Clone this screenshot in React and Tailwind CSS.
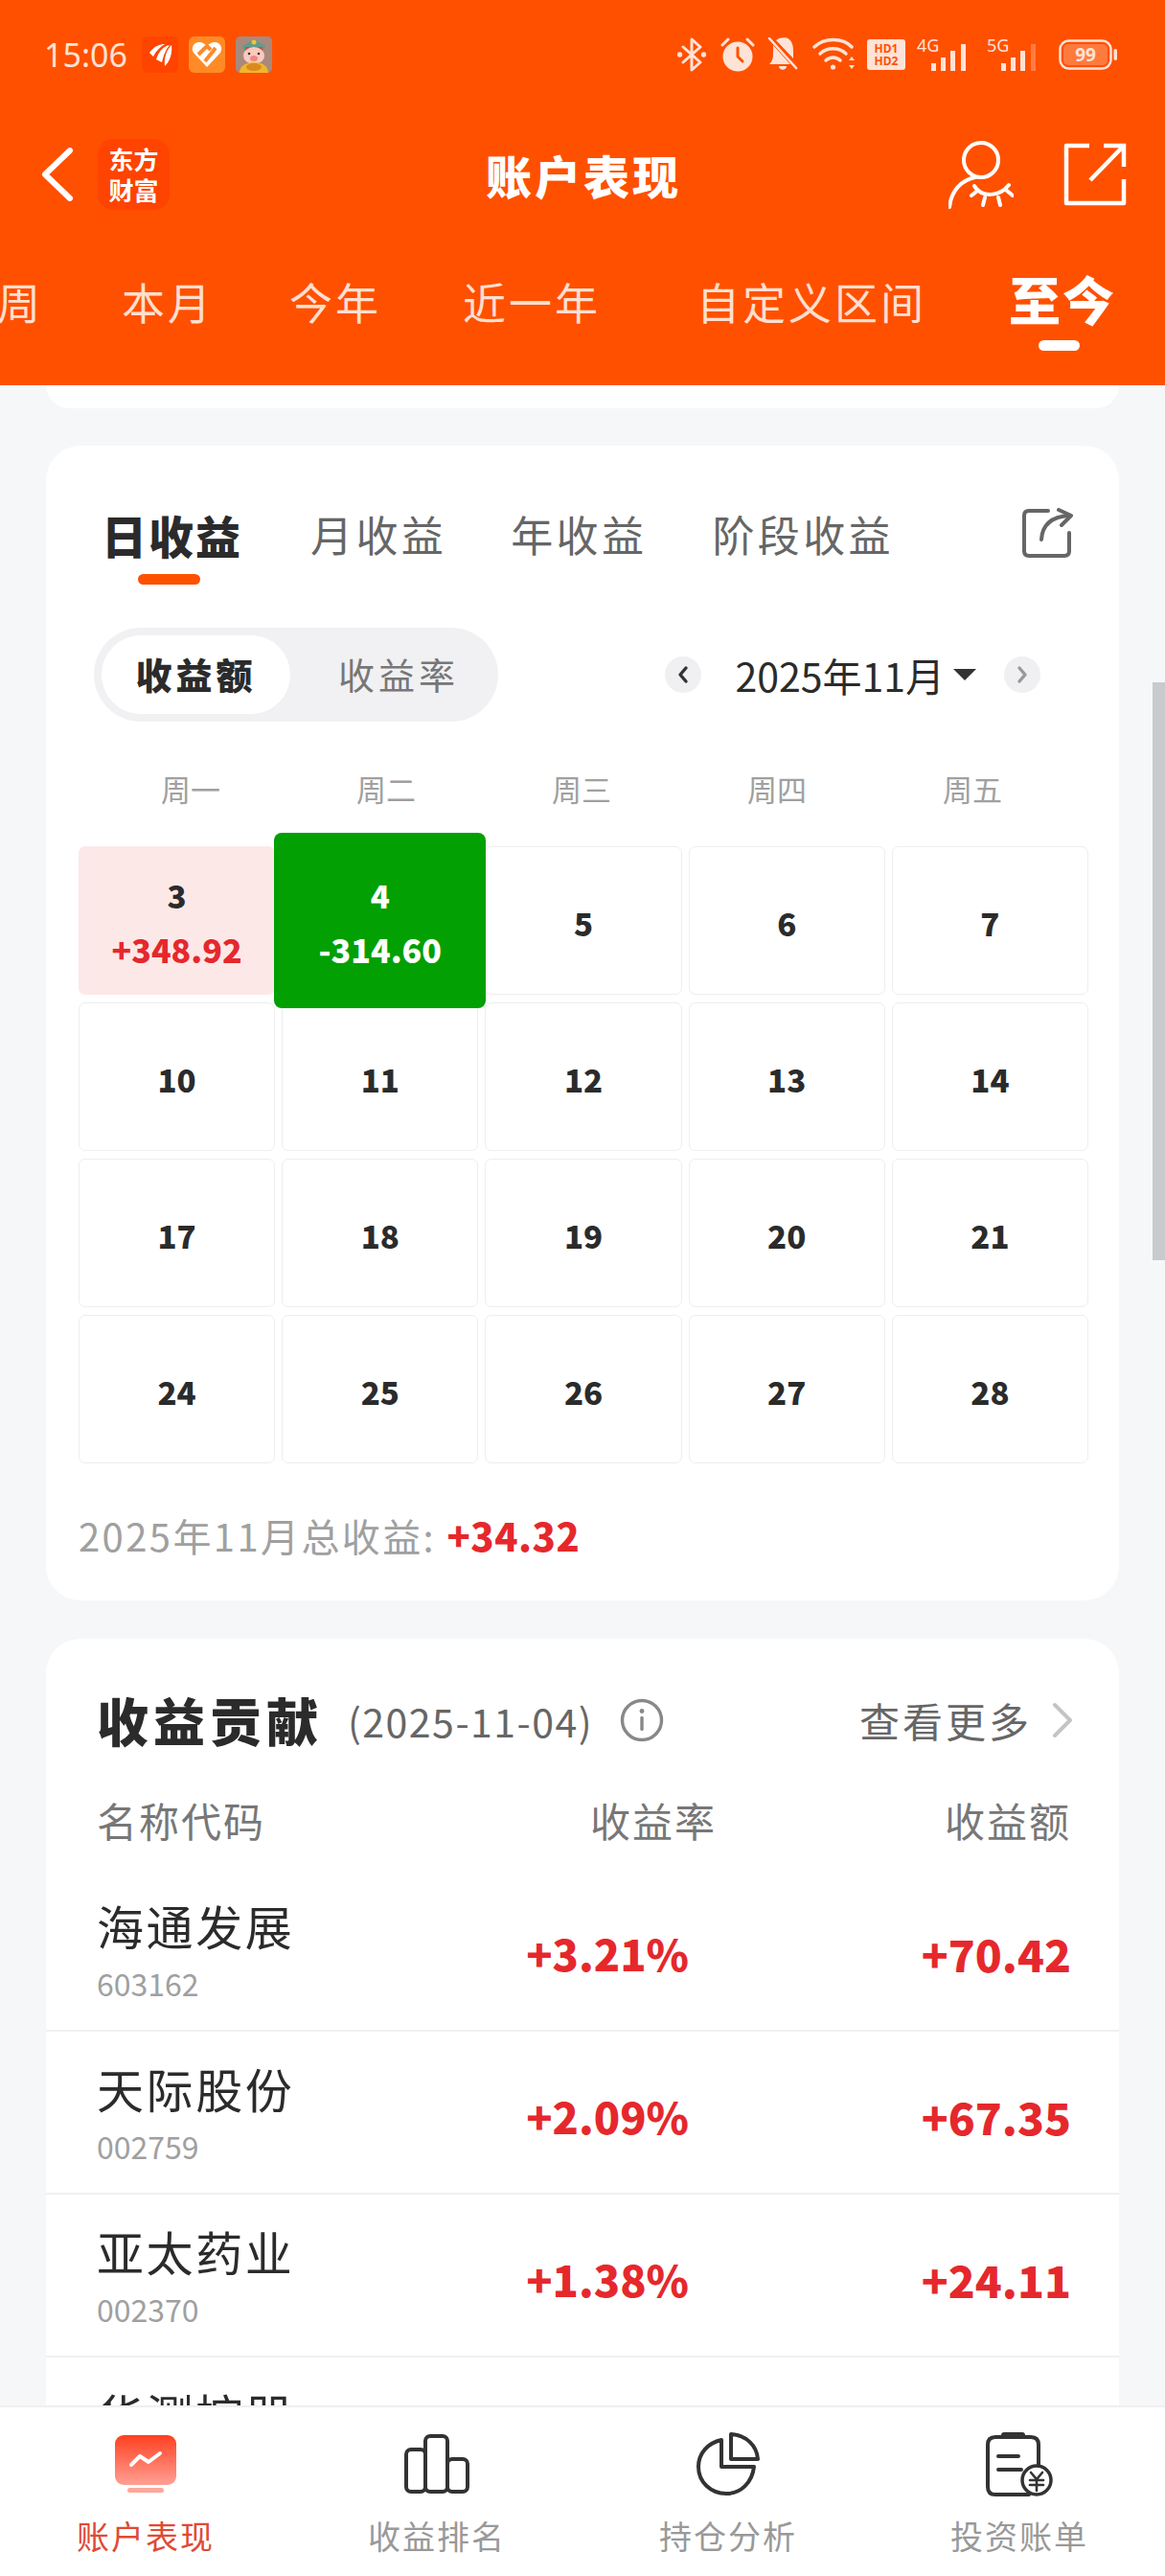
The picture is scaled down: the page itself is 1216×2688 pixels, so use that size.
import React from "react";

const FONT = { fontFamily: '"Noto Sans CJK SC", "Noto Sans", sans-serif' };

function Bluetooth() {
  return (
    <svg width="30" height="36" viewBox="0 0 30 36" fill="none" stroke="#ffe3d6" strokeWidth="3" strokeLinejoin="round" strokeLinecap="round">
      <path d="M6 10 L24 26 L15 34 V2 L24 10 L6 26" />
      <circle cx="2.5" cy="18" r="1.2" fill="#ffe3d6" />
      <circle cx="27.5" cy="18" r="1.2" fill="#ffe3d6" />
    </svg>
  );
}
function Alarm() {
  return (
    <svg width="36" height="36" viewBox="0 0 36 36" fill="none">
      <circle cx="18" cy="20" r="15.5" fill="#ffe3d6" />
      <path d="M18 11 V20 L23 25" stroke="#ff5000" strokeWidth="3" strokeLinecap="round" />
      <path d="M2 8 L8 2 M34 8 L28 2" stroke="#ffe3d6" strokeWidth="3" strokeLinecap="round" />
    </svg>
  );
}
function BellOff() {
  return (
    <svg width="32" height="36" viewBox="0 0 32 36" fill="none">
      <path d="M6 8 L24 28 H2 C5 25 6 22 6 17 Z" fill="#ffe3d6" />
      <path d="M9 3 C12 0 17 0 20 0.5 C25 2 27 8 27 14 V22 Z" fill="#ffe3d6" />
      <path d="M2 2 L30 33" stroke="#ff5000" strokeWidth="2" />
      <path d="M2 1 L30 32" stroke="#ffe3d6" strokeWidth="2.6" strokeLinecap="round" />
      <path d="M12 30 H20 C20 35 12 35 12 30 Z" fill="#ffe3d6" />
    </svg>
  );
}
function Wifi() {
  return (
    <svg width="46" height="36" viewBox="0 0 46 36" fill="none" stroke="#ffe3d6" strokeWidth="3.4" strokeLinecap="round">
      <path d="M2 10 C12 0 32 0 41 10" />
      <path d="M8 17 C15 10 28 10 35 17" />
      <path d="M14 24 C18 20 25 20 29 24" />
      <circle cx="21.5" cy="31" r="2.6" fill="#ffe3d6" stroke="none" />
      <path d="M38 24 L41 20 L44 24 Z M38 29 H44 L41 33 Z" fill="#ffe3d6" stroke="none" />
    </svg>
  );
}
function Hd() {
  return (
    <div className="w-[40px] h-[32px] rounded-[3px] bg-[#ffe3d6] flex flex-col items-center justify-center text-[#ff5000] text-[12px] leading-[13px] font-bold" style={{ fontFamily: '"Noto Sans", sans-serif' }}>
      <span>HD1</span>
      <span>HD2</span>
    </div>
  );
}
function Signal({ label, faded }) {
  return (
    <div className="relative w-[59px] h-[36px]">
      <span className="absolute left-0 top-[-2px] text-[18px] leading-[20px] text-[#ffe3d6]" style={{ fontFamily: '"Noto Sans", sans-serif' }}>{label}</span>
      <svg className="absolute left-0 top-0" width="59" height="36" viewBox="0 0 59 36" fill="#ffe3d6">
        <rect x="15" y="27" width="5" height="8" />
        <rect x="25" y="21" width="5" height="14" />
        <rect x="35" y="14" width="5" height="21" />
        <rect x="46" y="7" width="5" height="28" opacity={faded ? 0.3 : 1} />
      </svg>
    </div>
  );
}
function Battery() {
  return (
    <svg width="61" height="32" viewBox="0 0 61 32" fill="none">
      <rect x="1.5" y="1.5" width="53" height="29" rx="9" stroke="#ffe3d6" strokeWidth="2.5" />
      <rect x="5" y="5" width="46" height="22" rx="5" fill="#ff7a3d" />
      <rect x="57.5" y="10" width="3.5" height="12" rx="1.7" fill="#ffe3d6" />
      <text x="28" y="23" textAnchor="middle" fontSize="19" fontWeight="700" fill="#ffe3d6" fontFamily="Noto Sans, sans-serif">99</text>
    </svg>
  );
}
function AppA() {
  return (
    <svg width="38" height="38" viewBox="0 0 38 38">
      <rect width="38" height="38" rx="6" fill="#ff4400" />
      <path d="M8 17 C13 10 19 8 24 8 C19 11 15 15 12 21 Z M15 24 C18 15 23 10 29 9 C25 14 23 19 21 27 Z M24 31 C23 22 26 14 31 9 C32 17 30 25 24 31 Z" fill="#fff" />
    </svg>
  );
}
function AppB() {
  return (
    <svg width="38" height="38" viewBox="0 0 38 38">
      <rect width="38" height="38" rx="6" fill="#ff8a26" />
      <path d="M19 32 L5 17 C2 12 5 6 11 6 C14 6 17 8 19 10 C21 8 24 6 27 6 C33 6 36 12 33 17 Z" fill="#fff" />
      <path d="M10 19 L19 10 L23 14 M17 26 L28 12" stroke="#ff8a26" strokeWidth="4" fill="none" />
    </svg>
  );
}
function AppC() {
  return (
    <svg width="38" height="38" viewBox="0 0 38 38">
      <rect width="38" height="38" rx="5" fill="#a9897c" />
      <path d="M7 10 L19 3 L31 10 L29 15 H9 Z" fill="#5f9c8e" />
      <rect x="10" y="11" width="18" height="4" fill="#e0463a" />
      <circle cx="19" cy="6" r="2.5" fill="#f3c23a" />
      <ellipse cx="19" cy="20" rx="11" ry="9" fill="#fbc9bd" />
      <ellipse cx="19" cy="23" rx="4" ry="3" fill="#e88" />
      <circle cx="14" cy="18" r="1.3" fill="#333" />
      <circle cx="24" cy="18" r="1.3" fill="#333" />
      <path d="M4 38 C4 30 12 27 19 27 C26 27 34 30 34 38 Z" fill="#f1b52c" />
      <ellipse cx="19" cy="32" rx="8" ry="4" fill="#d98a1f" />
    </svg>
  );
}

function BackIcon() {
  return (
    <svg width="36" height="56" viewBox="0 0 36 56" fill="none" stroke="#fff" strokeWidth="6" strokeLinecap="round" strokeLinejoin="round">
      <path d="M31 3 L5 28 L31 53" />
    </svg>
  );
}
function UserEye() {
  return (
    <svg width="68" height="72" viewBox="0 0 68 72" fill="none" stroke="#fff" strokeWidth="4" strokeLinecap="round">
      <circle cx="34" cy="21" r="18" />
      <path d="M28 39 C14 42 3 52 1 70" />
      <path d="M27 48 C34 60 53 60 63 47" />
      <path d="M38 60 L36 68 M52 60 L54 68 M61 53 L67 58 M29 54 L24 58" />
    </svg>
  );
}
function ExternalIcon() {
  return (
    <svg width="66" height="66" viewBox="0 0 66 66" fill="none" stroke="#fff" strokeWidth="4.5">
      <path d="M27 3 H3 V63 H63 V38" strokeLinejoin="round" />
      <path d="M63 25 V3 H42 M63 3 L28 39" />
    </svg>
  );
}
function ShareIcon() {
  return (
    <svg width="54" height="52" viewBox="0 0 54 52" fill="none" stroke="#666" strokeWidth="4" strokeLinecap="round" strokeLinejoin="round">
      <path d="M28 3 H8 Q3 3 3 8 V45 Q3 50 8 50 H45 Q50 50 50 45 V26" />
      <path d="M21 33 C22 17 32 9 50 8" />
      <path d="M39 2 L52 8 L42 18" />
    </svg>
  );
}
function Chevron({ dir, color }) {
  return (
    <svg width="12" height="20" viewBox="0 0 12 20" fill="none" stroke={color} strokeWidth="3.4" strokeLinecap="round" strokeLinejoin="round">
      <path d={dir === "left" ? "M9 3 L3 10 L9 17" : "M3 3 L9 10 L3 17"} />
    </svg>
  );
}
function InfoIcon() {
  return (
    <svg width="46" height="46" viewBox="0 0 46 46" fill="none">
      <circle cx="23" cy="23" r="20.5" stroke="#888" strokeWidth="3.4" />
      <circle cx="23" cy="13.5" r="2.4" fill="#888" />
      <rect x="21.3" y="19" width="3.4" height="15" rx="1.4" fill="#888" />
    </svg>
  );
}

function TradeIcon() {
  return (
    <svg width="64" height="64" viewBox="0 0 64 64">
      <defs>
        <linearGradient id="redgrad" x1="0" y1="0" x2="0" y2="1">
          <stop offset="0" stopColor="#ff4020" />
          <stop offset="1" stopColor="#ffa094" />
        </linearGradient>
      </defs>
      <rect x="0" y="2" width="64" height="52" rx="9" fill="url(#redgrad)" />
      <rect x="13" y="57" width="38" height="5" rx="2.5" fill="#ffa79c" />
      <path d="M17 33 L26 24 L35 30 L47 21" fill="none" stroke="#fff" strokeWidth="4" strokeLinecap="round" strokeLinejoin="round" />
    </svg>
  );
}
function BarsIcon() {
  return (
    <svg width="68" height="62" viewBox="0 0 68 62" fill="none" stroke="#333" strokeWidth="4" strokeLinejoin="round">
      <rect x="2" y="16" width="20" height="44" rx="5" />
      <rect x="22" y="2" width="23" height="58" rx="5" />
      <rect x="45" y="26" width="21" height="34" rx="5" />
    </svg>
  );
}
function PieIcon() {
  return (
    <svg width="66" height="66" viewBox="0 0 66 66" fill="none" stroke="#333" strokeWidth="4" strokeLinejoin="round">
      <path d="M26 8 C12 11 2 22 2 36 C2 52 15 64 31 64 C46 64 58 53 60 36 H26 Z" />
      <path d="M36 2 C52 3 63 14 64 28 H36 Z" />
    </svg>
  );
}
function BillIcon() {
  return (
    <svg width="72" height="68" viewBox="0 0 72 68" fill="none" stroke="#333" strokeWidth="4" strokeLinecap="round">
      <path d="M46 66 H11 Q3 66 3 58 V14 Q3 6 11 6 H48 Q56 6 56 14 V36" />
      <path d="M20 4 H39" strokeWidth="6" />
      <path d="M14 26 H35 M14 40 H38" />
      <circle cx="54" cy="51" r="15" strokeWidth="3.5" />
      <path d="M48 43 L54 50 L60 43 M47 51 H61 M47 56 H61 M54 50 V62" strokeWidth="2.6" />
    </svg>
  );
}

function Cell({ n }) {
  return (
    <div className="h-[155px] rounded-[7px] border border-[#eeeeee] bg-white flex items-center justify-center text-[33px] font-black text-[#2b2b2b] leading-none pt-[6px]">
      {n}
    </div>
  );
}

const rows = [
  ["海通发展", "603162", "+3.21%", "+70.42"],
  ["天际股份", "002759", "+2.09%", "+67.35"],
  ["亚太药业", "002370", "+1.38%", "+24.11"],
  ["华测控器", "", "", ""],
];

export default function App() {
  return (
    <div className="relative w-[1216px] h-[2688px] overflow-hidden bg-[#f6f7f9] flex flex-col" style={FONT}>
      {/* orange header */}
      <header className="h-[402px] shrink-0 bg-[#ff5000] flex flex-col">
        <div className="h-[110px] shrink-0 flex items-center pl-[46px] pr-[50px] pt-[4px]">
          <span className="text-[34px] leading-none text-[#ffe3d6] w-[102px]" style={{ fontFamily: '"Noto Sans", sans-serif' }}>15:06</span>
          <div className="flex gap-[11px]">
            <AppA />
            <AppB />
            <AppC />
          </div>
          <div className="ml-auto flex items-center">
            <Bluetooth />
            <div className="ml-[15px]"><Alarm /></div>
            <div className="ml-[13px]"><BellOff /></div>
            <div className="ml-[15px]"><Wifi /></div>
            <div className="ml-[11px]"><Hd /></div>
            <div className="ml-[12px]"><Signal label="4G" /></div>
            <div className="ml-[14px]"><Signal label="5G" faded /></div>
            <div className="ml-[16px]"><Battery /></div>
          </div>
        </div>
        <div className="h-[144px] shrink-0 flex items-center justify-between pl-[42px] pr-[40px]">
          <div className="w-[340px] flex items-center">
            <BackIcon />
            <div className="ml-[24px] w-[75px] h-[74px] rounded-[16px] bg-[#ff4300] flex flex-col items-center justify-center text-white font-bold text-[26px] leading-[32px]">
              <span>东方</span>
              <span>财富</span>
            </div>
          </div>
          <h1 className="text-[48px] leading-none tracking-[3px] font-black text-white whitespace-nowrap">账户表现</h1>
          <div className="w-[340px] flex items-center justify-end gap-[52px]">
            <UserEye />
            <ExternalIcon />
          </div>
        </div>
        <nav className="h-[148px] shrink-0 flex items-center pb-[26px] text-[45px] tracking-[3px] text-[#ffdfcf] whitespace-nowrap">
          <span className="ml-[-3px]">周</span>
          <span className="ml-[82px]">本月</span>
          <span className="ml-[79px]">今年</span>
          <span className="ml-[85px]">近一年</span>
          <span className="ml-[100px]">自定义区间</span>
          <span className="relative ml-[86px] text-[54px] font-black text-white tracking-[2px] leading-none mt-[-6px]">
            至今
            <span className="absolute left-[31px] top-[70px] w-[43px] h-[11px] rounded-full bg-white"></span>
          </span>
        </nav>
      </header>

      {/* scrolling content */}
      <main className="flex-1 min-h-0 overflow-hidden px-[48px]">
        <div className="h-[24px] bg-white rounded-b-[36px]"></div>

        {/* calendar card */}
        <section className="mt-[39px] bg-white rounded-[36px] pl-[34px] pr-[32px] pt-[44px] pb-[42px] h-[1205px]">
          <div className="h-[100px] flex items-center pl-[24px] pb-[4px]">
            <span className="relative text-[47px] leading-none font-black tracking-[2px] text-[#2b2b2b]">
              日收益
              <span className="absolute left-[38px] top-[65px] w-[65px] h-[11px] rounded-full bg-[#ff5000]"></span>
            </span>
            <span className="ml-[71px] text-[44px] tracking-[3.4px] leading-none text-[#666666]">月收益</span>
            <span className="ml-[67px] text-[44px] tracking-[3.4px] leading-none text-[#666666]">年收益</span>
            <span className="ml-[68px] text-[44px] tracking-[3.4px] leading-none text-[#666666]">阶段收益</span>
            <span className="ml-auto mr-[16px] mb-[2px]"><ShareIcon /></span>
          </div>
          <div className="h-[98px] mt-[46px] flex items-center">
            <div className="ml-[16px] w-[422px] h-[98px] rounded-full bg-[#f1f1f3] flex items-center pl-[8px]">
              <div className="w-[197px] h-[82px] rounded-full bg-white flex items-center justify-center text-[38px] tracking-[4px] font-black text-[#2b2b2b] pb-[3px]">收益额</div>
              <div className="ml-[50px] text-[38px] tracking-[4px] text-[#777777] pb-[3px]">收益率</div>
            </div>
            <div className="ml-auto mr-[50px] flex items-center">
              <div className="w-[38px] h-[38px] rounded-full bg-[#f0f0f2] flex items-center justify-center"><Chevron dir="left" color="#333" /></div>
              <span className="ml-[35px] text-[41px] leading-none text-[#2b2b2b]">2025年11月</span>
              <span className="ml-[9px] w-0 h-0 border-x-[12px] border-x-transparent border-t-[12px] border-t-[#333]"></span>
              <div className="ml-[29px] w-[38px] h-[38px] rounded-full bg-[#f0f0f2] flex items-center justify-center"><Chevron dir="right" color="#999" /></div>
            </div>
          </div>
          <div className="mt-[40px] ml-[15px] w-[1020px] h-[60px] grid grid-cols-5 items-center text-center text-[31px] text-[#a0a0a0]">
            <span>周一</span><span>周二</span><span>周三</span><span>周四</span><span>周五</span>
          </div>
          <div className="mt-[30px] grid grid-cols-5 gap-x-[7px] gap-y-[8px]">
            <div className="h-[155px] rounded-[7px] bg-[#fde8e8] flex flex-col items-center justify-center font-black leading-none pt-[4px]">
              <span className="text-[33px] text-[#2b2b2b]">3</span>
              <span className="mt-[23px] text-[34px] text-[#e5282c]">+348.92</span>
            </div>
            <div className="relative z-10 -mx-[8px] -my-[14px] h-[183px] rounded-[8px] bg-[#02a002] flex flex-col items-center justify-center font-black leading-none text-white pt-[4px]">
              <span className="text-[33px]">4</span>
              <span className="mt-[23px] text-[34px]">-314.60</span>
            </div>
            {[5, 6, 7, 10, 11, 12, 13, 14, 17, 18, 19, 20, 21, 24, 25, 26, 27, 28].map((n) => (
              <Cell key={n} n={n} />
            ))}
          </div>
          <p className="mt-[53px] h-[44px] leading-[44px] text-[40px] tracking-[2.4px] text-[#a0a0a0]">
            2025年11月总收益: <span className="font-black tracking-[0.5px] text-[#e5282c]">+34.32</span>
          </p>
        </section>

        {/* contribution card */}
        <section className="mt-[40px] bg-white rounded-t-[36px] pt-[55px] h-[1000px]">
          <div className="h-[60px] flex items-center pl-[53px] pr-[47px]">
            <span className="text-[54px] tracking-[5px] font-black text-[#2b2b2b] leading-none">收益贡献</span>
            <span className="ml-[26px] text-[41px] tracking-[1.5px] text-[#666666] leading-none">(2025-11-04)</span>
            <span className="ml-[28px]"><InfoIcon /></span>
            <span className="ml-auto text-[42px] tracking-[3px] text-[#666666] leading-none">查看更多</span>
            <span className="ml-[20px]">
              <svg width="24" height="38" viewBox="0 0 24 38" fill="none" stroke="#c4c4c4" strokeWidth="4" strokeLinecap="round" strokeLinejoin="round">
                <path d="M4 3 L20 19 L4 35" />
              </svg>
            </span>
          </div>
          <div className="mt-[44px] h-[60px] flex items-center pl-[53px] pr-[50px] text-[42px] tracking-[2px] text-[#777777] leading-none">
            <span className="flex-1">名称代码</span>
            <span className="w-[370px]">收益率</span>
            <span>收益额</span>
          </div>
          <div className="mt-[21px]">
            {rows.map((r) => (
              <div key={r[0]} className="h-[170px] border-b-2 border-[#f0f0f0] flex items-start pl-[53px] pr-[50px] pt-[29px]">
                <div className="flex-1">
                  <div className="text-[49px] tracking-[2.6px] leading-[60px] text-[#2b2b2b]">{r[0]}</div>
                  <div className="mt-[8px] text-[32px] leading-[44px] text-[#a0a0a0]">{r[1]}</div>
                </div>
                <div className="mt-[29px] w-[200px] text-right text-[45px] leading-[60px] font-black text-[#e5282c]">{r[2]}</div>
                <div className="mt-[29px] w-[399px] text-right text-[46px] leading-[60px] font-black text-[#e5282c]">{r[3]}</div>
              </div>
            ))}
          </div>
        </section>
      </main>

      {/* bottom tabs */}
      <footer className="relative z-10 h-[178px] shrink-0 bg-white border-t-2 border-[#efefef] grid grid-cols-4">
        {[
          ["账户表现", <TradeIcon key="a" />, "text-[#e04a35]"],
          ["收益排名", <BarsIcon key="b" />, "text-[#999999]"],
          ["持仓分析", <PieIcon key="c" />, "text-[#999999]"],
          ["投资账单", <BillIcon key="d" />, "text-[#999999]"],
        ].map(([label, icon, color]) => (
          <div key={label} className="flex flex-col items-center">
            <div className="h-[70px] mt-[24px] flex items-center">{icon}</div>
            <span className={`mt-[18px] text-[34px] tracking-[2px] leading-[44px] ${color}`}>{label}</span>
          </div>
        ))}
      </footer>

      {/* scrollbar overlay */}
      <div className="absolute right-0 top-[712px] w-[13px] h-[603px] bg-[#c9cace]"></div>
    </div>
  );
}
